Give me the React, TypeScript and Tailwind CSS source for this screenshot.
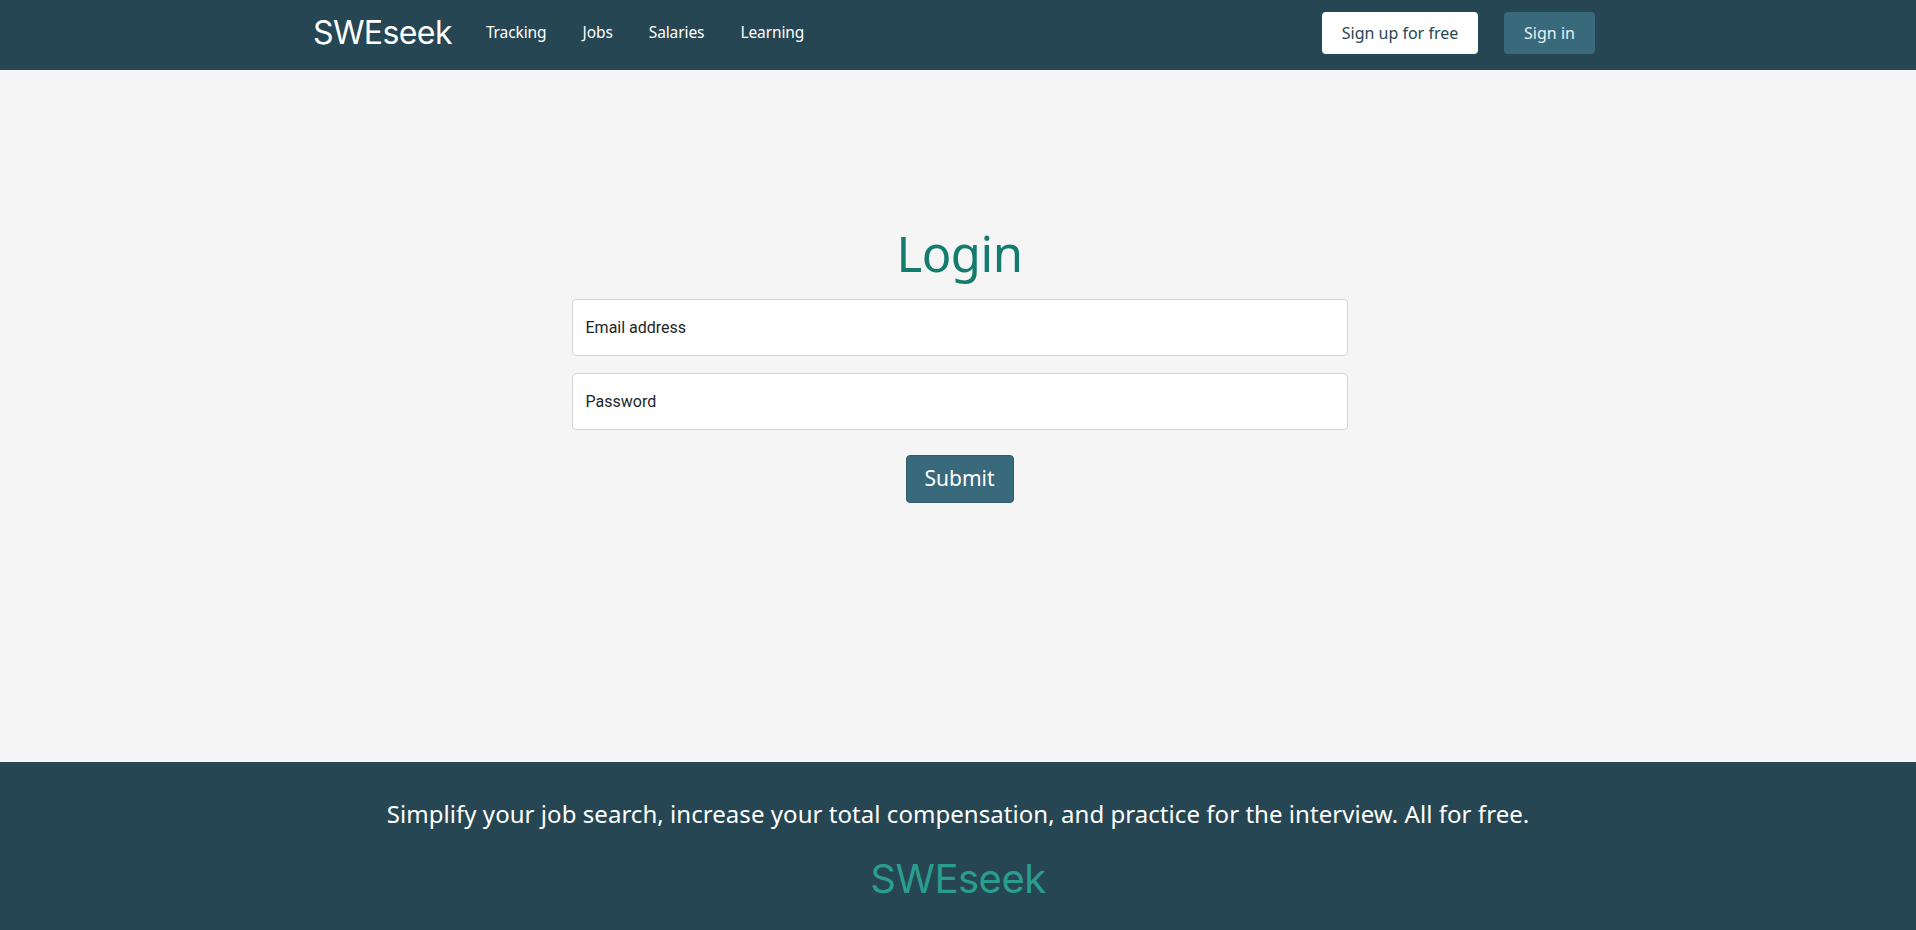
import React from "react";

const navLinks = ["Tracking", "Jobs", "Salaries", "Learning"];

const Header = () => {
  return (
    <header className="h-[70px] bg-[#264653] flex-none">
      <div className="mx-auto w-[1290px] h-full flex items-center justify-between pr-2 pb-[4px]">
        <div className="flex items-center">
          {/* Logo */}
          <a className="text-[32px] text-white font-['Inter',sans-serif] tracking-[-0.6px] leading-none mr-[34px]">
            SWEseek
          </a>
          {/* Nav */}
          <nav className="flex items-center gap-[36px] font-['Noto_Sans',sans-serif] text-[15.5px] tracking-[-0.1px] text-white">
            {navLinks.map((link) => (
              <a key={link} className="cursor-pointer">
                {link}
              </a>
            ))}
          </nav>
        </div>
        <div className="flex items-center gap-[26px] font-['Noto_Sans',sans-serif] text-[16px]">
          <button className="h-[42px] w-[156px] bg-white text-[#264653] rounded-[4px]">
            Sign up for free
          </button>
          <button className="h-[42px] w-[91px] bg-[#386a7c] text-[#e8f1f3] rounded-[4px]">
            Sign in
          </button>
        </div>
      </div>
    </header>
  );
};

const LoginForm = () => {
  return (
    <main className="flex-1 bg-[#f5f5f5] flex flex-col items-center pt-[152px] pl-[3px]">
      <h1 className="text-[49px] leading-[62px] text-[#137c6c] font-['Noto_Sans',sans-serif] tracking-[-0.5px]">
        Login
      </h1>
      <div className="w-[776px] mt-[15px] flex flex-col gap-[17px] font-['Roboto',sans-serif]">
        <div className="h-[57px] bg-white border border-[#d4d4d4] rounded-[4px] flex items-center px-[13px] text-[16px] text-[#212529]">
          Email address
        </div>
        <div className="h-[57px] bg-white border border-[#d4d4d4] rounded-[4px] flex items-center px-[13px] text-[16px] text-[#212529]">
          Password
        </div>
      </div>
      <button className="mt-[25px] w-[108px] h-[48px] bg-[#386a7c] text-white rounded-[4px] text-[21px] font-['Noto_Sans',sans-serif] border border-[#2f5d6e]">
        Submit
      </button>
    </main>
  );
};

const Footer = () => {
  return (
    <footer className="h-[168px] flex-none bg-[#264653] flex flex-col items-center pt-[36px]">
      <p className="text-[24px] text-white font-['Noto_Sans',sans-serif] leading-[32px] tracking-[0.05px]">
        Simplify your job search, increase your total compensation, and practice for the interview. All for free.
      </p>
      <p className="mt-[25px] text-[40px] text-[#2a9d8f] font-['Inter',sans-serif] tracking-[-0.5px] leading-[48px]">
        SWEseek
      </p>
    </footer>
  );
};

export default function App() {
  return (
    <div className="h-[930px] flex flex-col">
      <Header />
      <LoginForm />
      <Footer />
    </div>
  );
}
